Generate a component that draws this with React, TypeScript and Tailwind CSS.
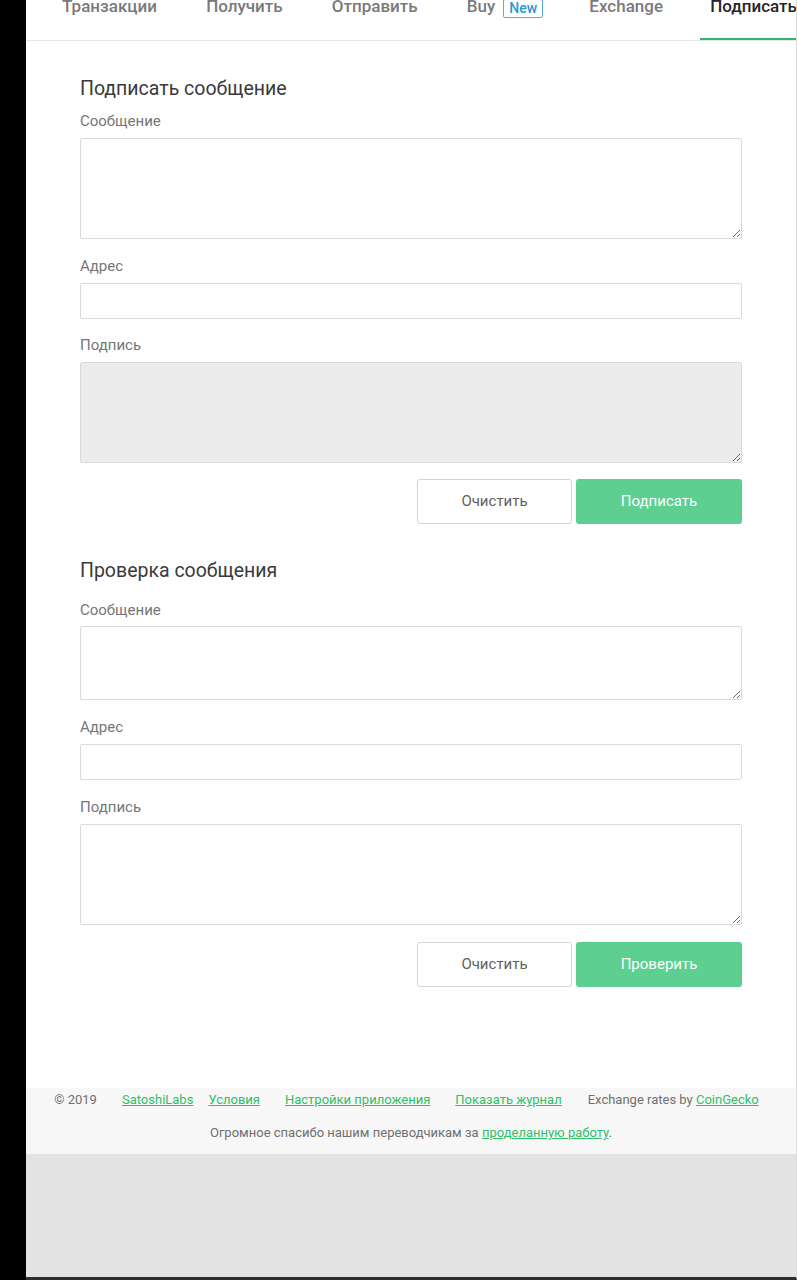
import React from "react";

const font = { fontFamily: "Roboto, 'Noto Sans', sans-serif" };

function Label({ children, className = "" }: { children: React.ReactNode; className?: string }) {
  return <div className={"h-5 leading-5 text-[15px] text-[#767676] " + className}>{children}</div>;
}

function Area({ h, disabled = false }: { h: string; disabled?: boolean }) {
  return (
    <textarea
      disabled={disabled}
      className={
        "block w-full border border-[#dadada] rounded-[2px] " +
        h +
        (disabled ? " bg-[#ececec]" : " bg-white")
      }
    />
  );
}

function Input() {
  return <input className="block w-full h-[36px] border border-[#dadada] rounded-[2px] bg-white" />;
}

function Buttons({ primary }: { primary: string }) {
  return (
    <div className="flex justify-end gap-[4px]">
      <button className="w-[155px] h-[45px] border border-[#d4d4d4] rounded-[3px] bg-white text-[15px] text-[#616161]">
        Очистить
      </button>
      <button className="w-[166px] h-[45px] rounded-[3px] bg-[#5ccf91] text-[15px] text-white">
        {primary}
      </button>
    </div>
  );
}

const tabs = [
  { t: "Транзакции", adj: "" },
  { t: "Получить", adj: "" },
  { t: "Отправить", adj: "" },
  { t: "Buy", adj: "" },
  { t: "Exchange", adj: "-ml-[3px]" },
  { t: "Подписать", adj: "-ml-[2px]" },
];

export default function App() {
  return (
    <div className="flex min-h-[1280px] bg-black" style={font}>
      <div className="w-[26px] shrink-0 bg-black" />
      <div className="flex-1 min-w-0 flex flex-col bg-white border-r border-[#dcdcdc] border-b-[3px] border-b-[#2e2e2e]">
        {/* nav */}
        <div className="h-[41px] border-b border-[#e6e6e6] overflow-hidden flex pl-[11.5px] shrink-0">
          {tabs.map(({ t, adj }) => {
            const active = t === "Подписать";
            return (
              <div key={t} className={"relative h-[40px] px-[24.6px] shrink-0 " + adj}>
                <div
                  className={
                    "-mt-[6px] leading-6 text-[17px] font-medium whitespace-nowrap flex items-center " +
                    (active ? "text-[#262626]" : "text-[#7a7a7a]")
                  }
                >
                  {t}
                  {t === "Buy" && (
                    <span className="ml-[8px] mt-[4px] inline-block border border-[#5aa9dc] rounded-[2px] px-[5px] leading-[17px] text-[14px] text-[#2a97d6]">
                      New
                    </span>
                  )}
                </div>
                {active && <div className="absolute bottom-0 left-[14px] right-0 h-[2px] bg-[#2cb865]" />}
              </div>
            );
          })}
        </div>

        {/* content */}
        <div className="w-[662px] mx-auto pt-[34px]">
          <div className="h-7 leading-7 text-[19.5px] text-[#3a3a3a]">Подписать сообщение</div>
          <Label className="mt-[8px] mb-[7px]">Сообщение</Label>
          <Area h="h-[101px]" />
          <Label className="mt-[17px] mb-[7px]">Адрес</Label>
          <Input />
          <Label className="mt-[16px] mb-[7px]">Подпись</Label>
          <Area h="h-[101px]" disabled />
          <div className="mt-[16px]">
            <Buttons primary="Подписать" />
          </div>

          <div className="mt-[33px] h-7 leading-7 text-[19.5px] text-[#3a3a3a]">Проверка сообщения</div>
          <Label className="mt-[15px] mb-[6px]">Сообщение</Label>
          <Area h="h-[74px]" />
          <Label className="mt-[17px] mb-[7px]">Адрес</Label>
          <Input />
          <Label className="mt-[17px] mb-[7px]">Подпись</Label>
          <Area h="h-[101px]" />
          <div className="mt-[17px]">
            <Buttons primary="Проверить" />
          </div>
        </div>

        {/* footer */}
        <div className="mt-[101px] bg-[#f7f7f7] h-[66px] text-[13px] text-[#707070] shrink-0">
          <div className="flex justify-center items-center h-[24px] leading-[24px] pr-[9px]">
            <span>© 2019</span>
            <a className="ml-[25px] underline text-[#2fbf69]">SatoshiLabs</a>
            <a className="ml-[15px] underline text-[#2fbf69]">Условия</a>
            <a className="ml-[25px] underline text-[#2fbf69]">Настройки приложения</a>
            <a className="ml-[25px] underline text-[#2fbf69]">Показать журнал</a>
            <span className="ml-[26px]">
              Exchange rates by <a className="underline text-[#2fbf69]">CoinGecko</a>
            </span>
          </div>
          <div className="mt-[11px] text-center leading-[20px]">
            Огромное спасибо нашим переводчикам за{" "}
            <a className="underline text-[#2fbf69]">проделанную работу</a>.
          </div>
        </div>
        <div className="flex-1 bg-[#e3e3e3]" />
      </div>
    </div>
  );
}
